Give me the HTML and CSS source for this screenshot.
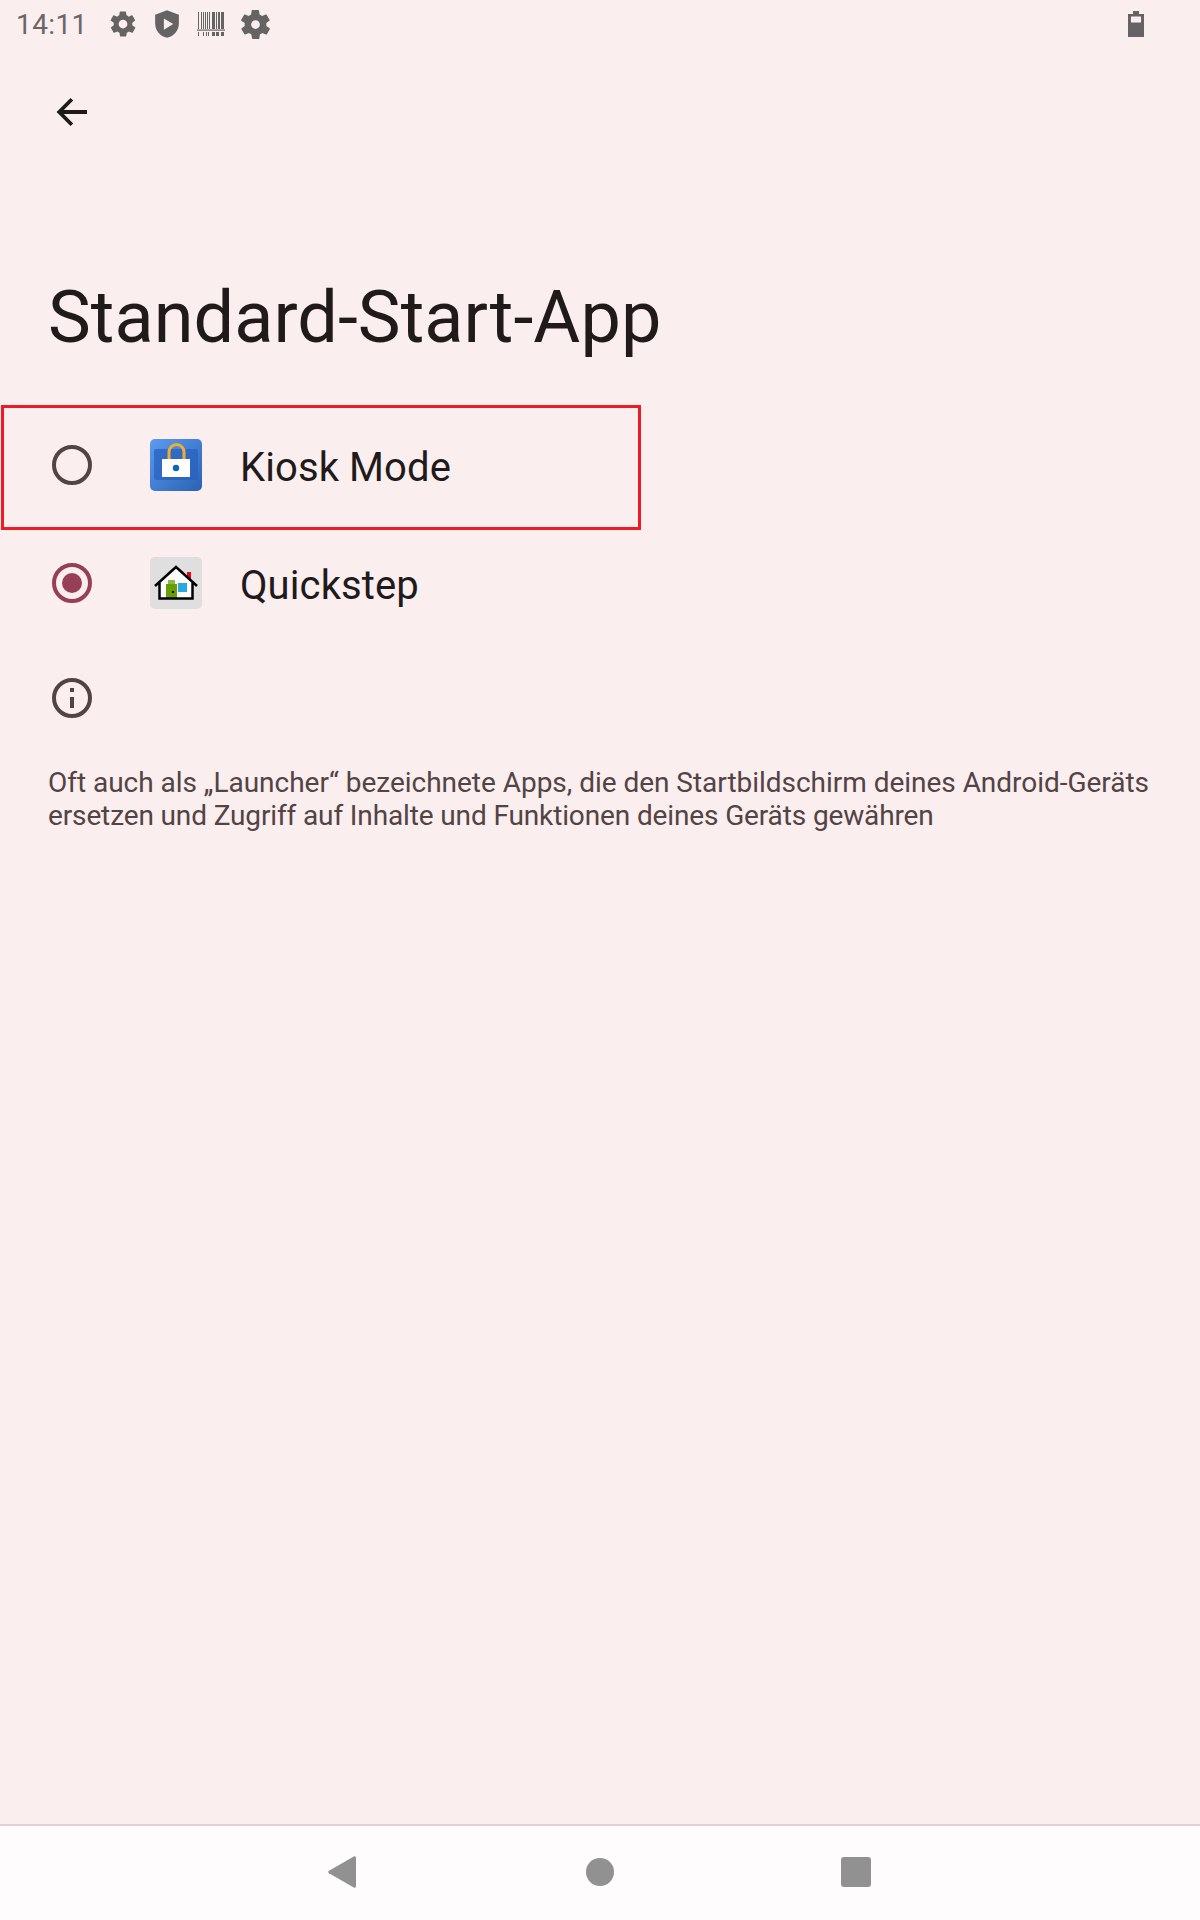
FILE: index.html
```html
<!DOCTYPE html>
<html lang="de">
<head>
<meta charset="utf-8">
<title>Standard-Start-App</title>
<link rel="stylesheet" href="styles.css">
</head>
<body>
<div class="screen">
  <header class="status">
    <span class="time">14:11</span>
    <svg class="si si-gear1" viewBox="0 0 24 24"><path fill-rule="evenodd" d="M19.4 13a7.5 7.5 0 0 0 0-2l2.1-1.600a.5.5 0 0 0 .1-.6l-2-3.500a.5.5 0 0 0-.6-.2l-2.500 1a7.300 7.300 0 0 0-1.700-1l-.4-2.600a.5.5 0 0 0-.5-.5h-4a.5.5 0 0 0-.5.4l-.4 2.700a7.300 7.300 0 0 0-1.700 1l-2.500-1a.5.5 0 0 0-.6.2l-2 3.500a.5.5 0 0 0 .1.6L4.600 11a7.500 7.500 0 0 0 0 2l-2.100 1.600a.5.5 0 0 0-.1.6l2 3.500c.1.2.4.3.6.2l2.500-1c.5.4 1.100.7 1.700 1l.4 2.600c0 .3.2.5.5.5h4c.3 0 .5-.2.5-.4l.4-2.700c.6-.3 1.200-.6 1.700-1l2.500 1c.2.1.5 0 .6-.2l2-3.500a.5.5 0 0 0-.1-.6ZM12 15.500a3.500 3.500 0 1 1 0-7 3.500 3.500 0 0 1 0 7Z"/></svg>
    <svg class="si si-shield" viewBox="0 0 24 24"><path fill-rule="evenodd" d="M12 1 2.500 4.600v7c0 5.600 4 10.500 9.500 11.400 5.500-.9 9.500-5.800 9.500-11.400v-7ZM9.500 16.500v-9l7.500 4.500Z"/></svg>
    <svg class="si si-barcode" viewBox="0 0 28 24">
      <path d="M1 0h1v17H1zM4 0h1v17H4zM6 0h1v17H6zM8 0h1v17H8zM10 0h1v17h-1zM12 0h1v17h-1zM15 0h3v17h-3zM19 0h1v17h-1zM21 0h2v17h-2zM24 0h3v17h-3z"/>
      <path d="M0 17.500h28v1.200H0z"/>
      <path d="M1 20h1v4H1zM6 20h1v4H6zM9 20h1v4H9zM11 20h1v4h-1zM15 20h3v4h-3zM19 20h3v4h-3zM24 20h3v4h-3z"/>
    </svg>
    <svg class="si si-gear2" viewBox="0 0 24 24"><path fill-rule="evenodd" d="M19.400 13a7.500 7.500 0 0 0 0-2l2.100-1.600a.5.5 0 0 0 .1-.6l-2-3.500a.5.5 0 0 0-.6-.2l-2.500 1a7.300 7.300 0 0 0-1.700-1l-.4-2.600a.5.5 0 0 0-.5-.5h-4a.5.5 0 0 0-.5.4l-.4 2.700a7.300 7.300 0 0 0-1.700 1l-2.500-1a.5.5 0 0 0-.6.2l-2 3.500a.5.5 0 0 0 .1.6L4.600 11a7.500 7.500 0 0 0 0 2l-2.100 1.600a.5.5 0 0 0-.1.6l2 3.500c.1.2.4.3.6.2l2.500-1c.5.4 1.100.7 1.700 1l.4 2.600c0 .3.2.5.5.5h4c.3 0 .5-.2.5-.4l.4-2.700c.6-.3 1.200-.6 1.700-1l2.500 1c.2.1.5 0 .6-.2l2-3.500a.5.5 0 0 0-.1-.6ZM12 15a3 3 0 1 1 0-6 3 3 0 0 1 0 6Z"/></svg>
    <svg class="si si-battery" viewBox="0 0 16 26"><path fill-rule="evenodd" d="M5 0h6v3h5v23H0V3h5ZM3 5.500v6h10v-6Z"/></svg>
  </header>

  <div class="toolbar">
    <svg class="back" viewBox="0 0 32 32"><path d="M31 14H7.800l9.400-9.400L14.500 2 .6 16l13.900 14 2.700-2.600L7.800 18H31Z"/></svg>
  </div>

  <h1 class="title">Standard-Start-App</h1>

  <div class="list">
    <div class="highlight"></div>
    <div class="row">
      <span class="radio"></span>
      <svg class="app" viewBox="0 0 52 52">
        <defs>
          <linearGradient id="blue" x1="0" y1="0" x2="1" y2="1"><stop offset="0" stop-color="#5b9bef"/><stop offset="1" stop-color="#2a62b4"/></linearGradient>
        </defs>
        <rect width="52" height="52" rx="5" fill="url(#blue)"/>
        <rect x="4" y="10" width="44" height="31" rx="2" fill="#2a61bd" opacity=".75"/>
        <path d="M19 20v-7a7.500 7.500 0 0 1 15 0v7" fill="none" stroke="#f2ad2a" stroke-width="3"/>
        <rect x="12" y="20" width="28" height="18" fill="#fff"/>
        <circle cx="26" cy="29" r="3.200" fill="#0a67b8"/>
      </svg>
      <span class="label">Kiosk Mode</span>
    </div>
    <div class="row">
      <span class="radio radio-on"></span>
      <svg class="app" viewBox="0 0 52 52">
        <rect width="52" height="52" rx="5" fill="#dfdfdf"/>
        <path d="M37 15h4v10h-4z" fill="#e30613"/>
        <path d="M9 25 26 10l17 15v17H9Z" fill="#fff"/>
        <path d="M16 27h11v15H16z" fill="#6a9e07"/>
        <path d="M18 23h7v4h-7z" fill="#8db84a"/>
        <path d="M28 26h9v9h-9z" fill="#2aa9e0"/>
        <path d="M5 29 26 10l21 19M9.500 26v15.500h33V26" fill="none" stroke="#000" stroke-width="2.500"/>
        <rect x="22" y="34" width="2" height="2" fill="#000"/>
      </svg>
      <span class="label">Quickstep</span>
    </div>
  </div>

  <svg class="info" viewBox="0 0 40 40">
    <circle cx="20" cy="20" r="18" fill="none" stroke="#524345" stroke-width="4"/>
    <path d="M18 10h4v4h-4zM18 19h4v11h-4z" fill="#524345"/>
  </svg>

  <p class="desc">Oft auch als „Launcher“ bezeichnete Apps, die den Startbildschirm deines Android-Geräts <span class="desc-tight">ersetzen und Zugriff auf Inhalte und Funktionen deines Geräts gewähren</span></p>

  <div class="spacer"></div>

  <nav class="navbar">
    <svg class="nav-back" viewBox="0 0 28 32"><path d="M25.800.5 1 14.800a1.500 1.500 0 0 0 0 2.400L25.800 31.500a1.500 1.500 0 0 0 2.200-1.300V1.800A1.500 1.500 0 0 0 25.800.5Z"/></svg>
    <span class="nav-home"></span>
    <span class="nav-recent"></span>
  </nav>
</div>
</body>
</html>
```

FILE: styles.css
```css
* { box-sizing: border-box; }
html, body { margin: 0; padding: 0; }
body { font-family: Roboto, "Noto Sans", sans-serif; background: #fbeeee; }

.screen {
  width: 1200px;
  height: 1920px;
  display: flex;
  flex-direction: column;
  background: #fbeeee;
  overflow: hidden;
}

.status {
  height: 48px;
  flex: none;
  display: flex;
  align-items: center;
  padding-left: 16px;
  padding-right: 56px;
  color: #666;
}
.time { font-size: 28px; letter-spacing: .4px; color: #6a6667; width: 92px; flex: none; }
.si { fill: #666364; flex: none; display: block; }
.si-gear1 { width: 30px; height: 30px; }
.si-shield { width: 30px; height: 30px; margin-left: 14px; }
.si-barcode { width: 28px; height: 24px; margin-left: 15px; }
.si-gear2 { width: 35px; height: 35px; margin-left: 13px; }
.si-battery { width: 16px; height: 26px; margin-left: auto; }

.toolbar {
  height: 128px;
  flex: none;
  display: flex;
  align-items: flex-start;
  padding: 48px 0 0 56px;
}
.back { width: 32px; height: 32px; fill: #201a1b; display: block; }

.title {
  margin: 0;
  padding: 72px 0 0 48px;
  height: 229px;
  flex: none;
  font-size: 72px;
  font-weight: 400;
  letter-spacing: .07px;
  line-height: 140px;
  color: #201a1b;
}

.list {
  position: relative;
  flex: none;
}
.highlight {
  position: absolute;
  left: 1px;
  top: 0;
  width: 640px;
  height: 125px;
  border: 3px solid #ed1c24;
  pointer-events: none;
}
.row {
  height: 118px;
  display: flex;
  align-items: center;
  padding: 2px 0 0 52px;
}
.radio {
  width: 40px;
  height: 40px;
  border-radius: 50%;
  border: 4px solid #524345;
  flex: none;
  position: relative;
}
.radio-on { border-color: #964058; }
.radio-on::after {
  content: "";
  position: absolute;
  left: 6px;
  top: 6px;
  width: 20px;
  height: 20px;
  border-radius: 50%;
  background: #964058;
}
.app { width: 52px; height: 52px; margin-left: 58px; flex: none; display: block; }
.label { margin-left: 38px; padding-top: 4px; font-size: 40px; letter-spacing: .1px; color: #201a1b; }

.info { width: 40px; height: 40px; margin: 37px 0 0 52px; flex: none; display: block; }

.desc {
  margin: 48px 0 0;
  padding: 0 40px 0 48px;
  font-size: 28px;
  letter-spacing: -.03px;
  line-height: 33px;
  color: #524345;
}
.desc-tight { letter-spacing: -.13px; }

.spacer { flex: 1; }

.navbar {
  height: 96px;
  flex: none;
  background: #fefcfd;
  border-top: 2px solid #e0d0d3;
  display: flex;
  align-items: center;
  padding: 0 0 2px 328px;
}
.nav-back { width: 28px; height: 32px; fill: #919191; display: block; flex: none; }
.nav-home { width: 28px; height: 28px; border-radius: 50%; background: #919191; margin-left: 230px; flex: none; }
.nav-recent { width: 30px; height: 30px; border-radius: 3px; background: #919191; margin-left: 227px; flex: none; }
```
